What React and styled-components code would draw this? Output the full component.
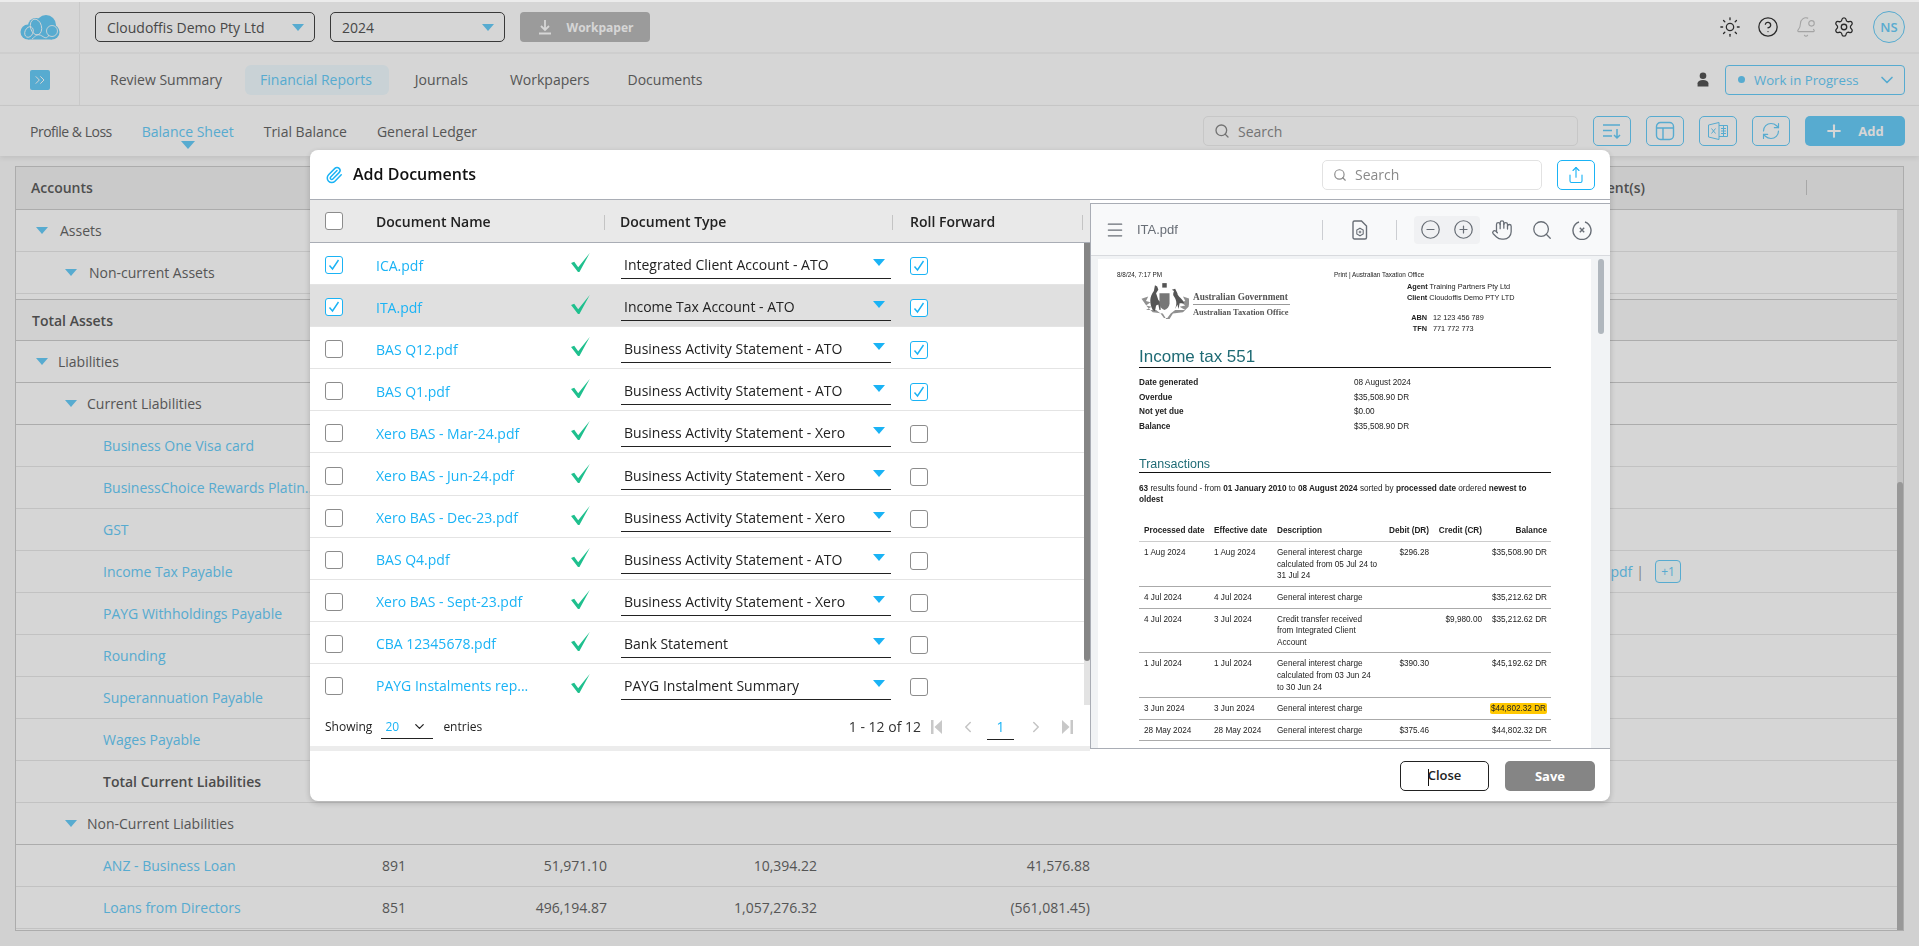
import React from 'react';
import styled, { createGlobalStyle } from 'styled-components';
import {
  Sun, CircleHelp, BellDot, Settings, ChevronDown, ChevronsRight, Search, Plus,
  Paperclip, Share, RefreshCw, Menu, CircleMinus, CirclePlus, Hand, ChevronLeft, ChevronRight,
} from 'lucide-react';

const BLUE = '#68ccf8';
const MODAL_BLUE = '#1ab3f5';

const GlobalStyle = createGlobalStyle`
  html, body { margin: 0; padding: 0; background: #f9f9f9; }
  body { font-family: "Open Sans", "Liberation Sans", sans-serif; font-size: 14px; color: #666; overflow: hidden; }
  * { box-sizing: border-box; }
`;

const Page = styled.div`
  width: 1919px;
  height: 946px;
  overflow: hidden;
  border-top: 2px solid #ececec;
`;

const TopBar = styled.header`
  display: flex;
  align-items: center;
  height: 52px;
  background: #fff;
  border-bottom: 2px solid #f6f6f6;
`;

const BrandCell = styled.div`
  width: 80px;
  height: 100%;
  display: flex;
  align-items: center;
  justify-content: center;
  border-right: 1px solid #f0f0f0;
`;

const Controls = styled.div`
  display: flex;
  align-items: center;
  gap: 15px;
  padding-left: 15px;
`;

const Picker = styled.div`
  width: ${(p) => p.$width}px;
  height: 30px;
  display: flex;
  align-items: center;
  justify-content: space-between;
  padding: 0 10px 0 11px;
  border: 1px solid #444;
  border-radius: 5px;
  color: #555;
  font-size: 14px;
`;

const Triangle = styled.i`
  display: block;
  width: 0;
  height: 0;
  flex: none;
  border-left: ${(p) => p.$size || 6}px solid transparent;
  border-right: ${(p) => p.$size || 6}px solid transparent;
  border-top: ${(p) => (p.$size || 6) + 1}px solid ${(p) => p.$color || BLUE};
`;

const WorkpaperButton = styled.button`
  width: 130px;
  height: 30px;
  display: flex;
  align-items: center;
  justify-content: center;
  gap: 14px;
  border: 0;
  border-radius: 4px;
  background: #b9b9b9;
  color: #fff;
  font: 700 12px "Open Sans", sans-serif;
`;

const TopIcons = styled.div`
  margin-left: auto;
  display: flex;
  align-items: center;
  gap: 16px;
  padding-right: 14px;
  color: #333;
`;

const Avatar = styled.div`
  width: 32px;
  height: 32px;
  margin-left: 2px;
  display: flex;
  align-items: center;
  justify-content: center;
  border: 1px solid ${BLUE};
  border-radius: 50%;
  background: #f6ffff;
  color: ${BLUE};
  font-size: 13px;
  font-weight: 600;
`;

const NavBar = styled.nav`
  display: flex;
  align-items: center;
  height: 52px;
  background: #fff;
  border-bottom: 1px solid #efefef;
`;

const ExpandIcon = styled.div`
  width: 20px;
  height: 20px;
  display: flex;
  align-items: center;
  justify-content: center;
  border-radius: 2px;
  background: ${BLUE};
  color: #fff;
`;

const NavTabs = styled.div`
  display: flex;
  align-items: center;
  gap: 8px;
  padding-left: 15px;
`;

const NavTab = styled.a`
  height: 30px;
  display: flex;
  align-items: center;
  padding: 0 ${(p) => (p.$active ? 17 : 15)}px 0 15px;
  margin-right: ${(p) => p.$after || 0}px;
  border-radius: 6px;
  font-size: 14px;
  color: ${(p) => (p.$active ? BLUE : '#666')};
  background: ${(p) => (p.$active ? '#f0fbff' : 'transparent')};
`;

const StatusArea = styled.div`
  margin-left: auto;
  display: flex;
  align-items: center;
  gap: 16px;
  padding-right: 14px;
`;

const StatusPicker = styled.div`
  width: 180px;
  height: 30px;
  display: flex;
  align-items: center;
  gap: 9px;
  padding: 0 7px 0 12px;
  border: 1px solid ${BLUE};
  border-radius: 4px;
  color: ${BLUE};
  font-size: 13.2px;
`;

const StatusDot = styled.i`
  width: 7px;
  height: 7px;
  border-radius: 50%;
  background: ${BLUE};
`;

const StatusChevron = styled.span`
  margin-left: auto;
  display: flex;
`;

const SubBar = styled.div`
  display: flex;
  align-items: center;
  height: 50px;
  padding-left: 30px;
  background: #fff;
  box-shadow: 0 2px 5px rgba(0, 0, 0, 0.08);
`;

const SubTabs = styled.div`
  display: flex;
  gap: 30px;
`;

const SubTab = styled.a`
  position: relative;
  font-size: 14px;
  letter-spacing: ${(p) => p.$tight || 0}px;
  color: ${(p) => (p.$active ? BLUE : '#666')};
`;

const TabPointer = styled.span`
  position: absolute;
  left: 50%;
  bottom: -8px;
  margin-left: -7px;
`;

const ToolArea = styled.div`
  margin-left: auto;
  display: flex;
  align-items: center;
  gap: 15px;
  padding-right: 14px;
`;

const SearchBox = styled.div`
  width: ${(p) => p.$width}px;
  height: 30px;
  display: flex;
  align-items: center;
  gap: 8px;
  padding-left: 10px;
  border: 1px solid ${(p) => p.$border || '#eee'};
  border-radius: 5px;
  background: #fff;
  color: #8a8a8a;
  font-size: 14px;
`;

const ToolButton = styled.button`
  width: 38px;
  height: 30px;
  padding: 0;
  display: flex;
  align-items: center;
  justify-content: center;
  border: 1px solid ${BLUE};
  border-radius: 5px;
  background: #fff;
  color: ${BLUE};
`;

const AddButton = styled.button`
  width: 100px;
  height: 30px;
  display: flex;
  align-items: center;
  justify-content: center;
  gap: 14px;
  padding-right: 8px;
  border: 0;
  border-radius: 5px;
  background: ${BLUE};
  color: #fff;
  font: 700 13px "Open Sans", sans-serif;
`;

const AccountsTable = styled.section`
  margin: 10px 15px 0;
  height: 765px;
  display: flex;
  flex-direction: column;
  background: #fff;
  border: 1px solid #cdcdcd;
`;

const AccountsHead = styled.div`
  display: flex;
  align-items: center;
  justify-content: space-between;
  flex: none;
  height: 43px;
  padding: 0 96px 2px 15px;
  background: #f1f1f1;
  border-bottom: 1px solid #cdcdcd;
  font-weight: 600;
  font-size: 14px;
  color: #5d5d5d;
`;

const HeadSeparator = styled.i`
  width: 1px;
  height: 15px;
  margin-left: 161px;
  background: #c8c8c8;
`;

const HeadEnd = styled.div`
  display: flex;
  align-items: center;
`;

const AccountsBody = styled.div`
  flex: 1;
  min-height: 0;
  display: flex;
`;

const AccountsRows = styled.div`
  flex: 1;
  min-width: 0;
`;

const AccountRow = styled.div`
  display: grid;
  grid-template-columns: 366px 58px 167px 210px 273px 1fr;
  align-items: center;
  height: ${(p) => (p.$thin ? 6 : p.$total ? 41 : 42)}px;
  background: ${(p) => (p.$total ? '#f9f9f9' : '#fff')};
  border-bottom: 1px solid ${(p) => (p.$strong ? '#cdcdcd' : '#e8e8e8')};
  font-size: 14px;
`;

const AccountName = styled.div`
  padding-left: ${(p) => p.$indent}px;
  display: flex;
  align-items: center;
  gap: ${(p) => p.$gap || 0}px;
  white-space: nowrap;
  font-weight: ${(p) => (p.$bold ? 600 : 400)};
  color: ${(p) => (p.$link ? BLUE : p.$bold ? '#5a5a5a' : '#666')};
`;

const CodeCell = styled.div`
  color: #666;
`;

const Amount = styled.div`
  text-align: right;
  color: #666;
`;

const DocsCell = styled.div`
  display: flex;
  align-items: center;
  justify-content: flex-end;
  padding-right: 216px;
  color: ${BLUE};
`;

const DocsBar = styled.span`
  margin: 0 11px 0 4px;
  color: #999;
`;

const MoreChip = styled.span`
  width: 26px;
  height: 23px;
  display: flex;
  align-items: center;
  justify-content: center;
  border: 1px solid ${BLUE};
  border-radius: 4px;
  background: #f6ffff;
  font-size: 12px;
`;

const OuterTrack = styled.div`
  flex: none;
  width: 6px;
  display: flex;
  flex-direction: column;
  justify-content: flex-end;
  background: #eaeaea;
`;

const OuterThumb = styled.div`
  height: 448px;
  border-radius: 3px 3px 0 0;
  background: #b6b6b6;
`;

const Overlay = styled.div`
  position: fixed;
  inset: 2px 0 0 0;
  padding: 148px 0 0 310px;
  background: rgba(0, 0, 0, 0.16);
`;

const Dialog = styled.div`
  width: 1300px;
  height: 651px;
  display: flex;
  flex-direction: column;
  background: #fff;
  border-radius: 8px;
  box-shadow: 0 2px 6px rgba(0, 0, 0, 0.2);
  overflow: hidden;
`;

const DialogHead = styled.div`
  flex: none;
  height: 50px;
  display: flex;
  align-items: center;
  padding: 0 15px;
  border-bottom: 1px solid #a9adb5;
`;

const DialogTitle = styled.h2`
  margin: 0 0 2px 10px;
  color: #111;
  font-size: 16px;
  font-weight: 600;
`;

const HeadTools = styled.div`
  margin-left: auto;
  display: flex;
  align-items: center;
  gap: 15px;
`;

const UploadButton = styled.button`
  width: 38px;
  height: 30px;
  padding: 0;
  display: flex;
  align-items: center;
  justify-content: center;
  border: 1px solid ${MODAL_BLUE};
  border-radius: 5px;
  background: #fff;
  color: ${MODAL_BLUE};
`;

const DialogBody = styled.div`
  flex: none;
  height: 551px;
  display: flex;
`;

const DocsPanel = styled.div`
  flex: none;
  width: 780px;
  display: flex;
  flex-direction: column;
`;

const DocsHead = styled.div`
  flex: none;
  display: grid;
  grid-template-columns: 51px 229px 288px 190px;
  align-items: center;
  height: 43px;
  padding-left: 15px;
  background: #e9e9e9;
  border-bottom: 1px solid #a9adb5;
  color: #222;
  font-weight: 600;
  font-size: 14px;
`;

const DocsHeadCell = styled.div`
  position: relative;
  padding-left: ${(p) => p.$pad || 0}px;
  &::after {
    content: '';
    position: absolute;
    right: 0;
    top: 3px;
    width: 1px;
    height: 15px;
    background: #c4c4c4;
  }
`;

const DocsScroller = styled.div`
  flex: none;
  height: 462px;
  display: flex;
  overflow: hidden;
`;

const DocsList = styled.div`
  flex: 1;
  min-width: 0;
`;

const DocRow = styled.div`
  display: grid;
  grid-template-columns: 51px 194px 50px 273px 1fr;
  align-items: center;
  height: 42.1px;
  padding: 3px 0 0 15px;
  background: ${(p) => (p.$selected ? '#e0e0e0' : '#fff')};
  border-bottom: 1px solid #e4e4e4;
`;

const DocLink = styled.a`
  color: ${MODAL_BLUE};
  font-size: 14px;
  white-space: nowrap;
`;

const TickMark = styled.svg`
  display: block;
  width: 21px;
  height: 21px;
  margin-top: -5px;
`;

const TypeSelect = styled.div`
  height: 28px;
  margin: 0 2px 0 1px;
  display: flex;
  align-items: center;
  justify-content: space-between;
  padding: 0 6px 0 3px;
  border-bottom: 1.5px solid #222;
  color: #222;
  font-size: 14px;
`;

const TypeArrow = styled.span`
  margin-top: -4px;
`;

const RollCell = styled.div`
  padding: 2px 0 0 17px;
`;

const Box = styled.span`
  display: flex;
  align-items: center;
  justify-content: center;
  width: 18px;
  height: 18px;
  border: 1px solid ${(p) => (p.$checked ? MODAL_BLUE : '#8c8c8c')};
  border-radius: 3px;
  background: #fff;
`;

const DocsTrack = styled.div`
  flex: none;
  width: 6px;
  background: #e3e3e3;
`;

const DocsThumb = styled.div`
  height: 418px;
  border-radius: 0 0 3px 3px;
  background: #858585;
`;

const DocsFooter = styled.div`
  flex: none;
  height: 41px;
  display: flex;
  align-items: center;
  padding: 2px 8px 0 15px;
  font-size: 12px;
  color: #222;
`;

const PageSize = styled.div`
  width: 52px;
  height: 25px;
  margin: 0 10px 0 9px;
  display: flex;
  align-items: center;
  justify-content: space-between;
  padding: 0 6px 0 4px;
  border-bottom: 1px solid #222;
  color: ${MODAL_BLUE};
`;

const Pager = styled.div`
  margin-left: auto;
  display: flex;
  align-items: center;
  color: #c4c4c4;
`;

const PagerText = styled.span`
  color: #333;
  font-size: 14px;
`;

const PagerSlot = styled.span`
  width: 31px;
  display: flex;
  justify-content: center;
`;

const PagerCurrent = styled.span`
  width: 27px;
  height: 26px;
  margin: 0 6px 0 4px;
  display: flex;
  align-items: center;
  justify-content: center;
  border-bottom: 1px solid #222;
  color: ${MODAL_BLUE};
  font-size: 14px;
`;

const FooterStrip = styled.div`
  flex: none;
  height: 5px;
  background: #ececec;
`;

const Viewer = styled.div`
  flex: none;
  width: 520px;
  height: 546px;
  margin-top: 3px;
  display: flex;
  flex-direction: column;
  background: #f1f3f5;
  border: 1px solid #a9adb5;
  border-right: 0;
`;

const ViewerBar = styled.div`
  flex: none;
  height: 52px;
  display: flex;
  align-items: center;
  padding-left: 14px;
  background: #f8f9fa;
  border-bottom: 1px solid #d8dade;
  color: #686e76;
`;

const ViewerName = styled.span`
  width: 185px;
  margin-left: 12px;
  font: 13px "Liberation Sans", sans-serif;
`;

const ViewerRule = styled.i`
  width: 1px;
  height: 20px;
  background: #ccced2;
`;

const ViewerAction = styled.span`
  width: ${(p) => p.$width}px;
  display: flex;
  justify-content: center;
`;

const ZoomGroup = styled.div`
  width: 66px;
  height: 28px;
  margin: 0 2px 0 17px;
  display: flex;
  align-items: center;
  justify-content: space-around;
  border-radius: 4px;
  background: #f0f1f3;
`;

const ViewerBody = styled.div`
  flex: 1;
  min-height: 0;
  display: flex;
  padding: 3px 0 0 7px;
  gap: 7px;
`;

const PdfPage = styled.article`
  flex: none;
  width: 493px;
  height: 100%;
  overflow: hidden;
  background: #fff;
  color: #222;
  font: 8.2px "Liberation Sans", sans-serif;
  filter: blur(0.3px);
`;

const ViewerThumb = styled.div`
  flex: none;
  width: 6px;
  height: 75px;
  border-radius: 3px;
  background: #b0b7be;
`;

const PrintHead = styled.div`
  display: grid;
  grid-template-columns: 217px 1fr;
  height: 8px;
  margin-top: 12px;
  padding-left: 19px;
  line-height: 8px;
  font-size: 6.4px;
`;

const Letterhead = styled.div`
  display: grid;
  grid-template-columns: 309px 1fr;
  height: 52px;
  margin-top: 3px;
`;

const Crest = styled.div`
  display: flex;
  align-items: flex-start;
  gap: 4px;
  padding-left: 42px;
`;

const GovNames = styled.div`
  margin-top: 9px;
  width: 97px;
  color: #555;
  font: 700 9.3px "Liberation Serif", serif;
  line-height: 12px;
`;

const GovSecond = styled.div`
  margin-top: 1px;
  border-top: 1px solid #999;
  padding-top: 2px;
  font-size: 8.4px;
`;

const ClientLine = styled.div`
  line-height: 10.5px;
  font-size: 7.3px;
`;

const IdBlock = styled.div`
  margin-top: 10px;
`;

const IdLine = styled.div`
  display: grid;
  grid-template-columns: 20px 1fr;
  column-gap: 6px;
  line-height: 10.5px;
  font-size: 7.3px;
  & b { text-align: right; }
`;

const Section = styled.section`
  margin: ${(p) => p.$top}px 40px 0 41px;
`;

const PdfHeading = styled.h3`
  margin: 0;
  padding: 0;
  border-bottom: 1px solid #111;
  color: #1f6b75;
  font-weight: 400;
  font-size: ${(p) => p.$size}px;
  line-height: ${(p) => p.$line}px;
`;

const KeyRow = styled.div`
  display: grid;
  grid-template-columns: 215px 1fr;
  height: 14.5px;
  line-height: 14.5px;
`;

const Para = styled.p`
  margin: 0;
  line-height: 11.3px;
`;

const TxGrid = styled.div`
  display: grid;
  grid-template-columns: 70px 63px 113px 49px 53px 65px;
  line-height: 11.6px;
  white-space: nowrap;
  padding: ${(p) => (p.$head ? '3.5px 0 4.5px' : '5px 0 4px')};
  border-bottom: 1px solid ${(p) => (p.$head ? '#ccc' : '#aaa')};
  font-weight: ${(p) => (p.$head ? 700 : 400)};
`;

const TxCell = styled.div`
  padding: ${(p) => (p.$right ? '0 5px 0 0' : '0 0 0 5px')};
  text-align: ${(p) => (p.$right ? 'right' : 'left')};
`;

const Marked = styled.mark`
  padding: 1px;
  border-radius: 2px;
  background: #ffc800;
  color: #222;
`;

const DialogFooter = styled.div`
  flex: none;
  height: 50px;
  display: flex;
  justify-content: flex-end;
  gap: 16px;
  padding: 10px 15px 0 0;
`;

const CloseButton = styled.button`
  width: 89px;
  height: 30px;
  padding: 0;
  border: 1px solid #222;
  border-radius: 5px;
  background: #fff;
  color: #222;
  font: 600 13px "Open Sans", sans-serif;
  &::before {
    content: '';
    display: inline-block;
    width: 1px;
    height: 17px;
    margin-right: -1px;
    vertical-align: middle;
    background: #111;
  }
`;

const SaveButton = styled.button`
  width: 90px;
  height: 30px;
  border: 0;
  border-radius: 5px;
  background: #858585;
  color: #fff;
  font: 700 13px "Open Sans", sans-serif;
`;

const accountRows = [
  { name: 'Assets', indent: 20, arrow: true, gap: 12 },
  { name: 'Non-current Assets', indent: 49, arrow: true, gap: 12 },
  { thin: true, strong: true },
  { name: 'Total Assets', indent: 16, bold: true, total: true, strong: true },
  { name: 'Liabilities', indent: 20, arrow: true, gap: 10, strong: true },
  { name: 'Current Liabilities', indent: 49, arrow: true, gap: 10, strong: true },
  { name: 'Business One Visa card', indent: 87, link: true },
  { name: 'BusinessChoice Rewards Platin...', indent: 87, link: true },
  { name: 'GST', indent: 87, link: true },
  { name: 'Income Tax Payable', indent: 87, link: true, docs: true },
  { name: 'PAYG Withholdings Payable', indent: 87, link: true },
  { name: 'Rounding', indent: 87, link: true },
  { name: 'Superannuation Payable', indent: 87, link: true },
  { name: 'Wages Payable', indent: 87, link: true },
  { name: 'Total Current Liabilities', indent: 87, bold: true },
  { name: 'Non-Current Liabilities', indent: 49, arrow: true, gap: 10, strong: true },
  { name: 'ANZ - Business Loan', indent: 87, link: true, code: '891', values: ['51,971.10', '10,394.22', '41,576.88'] },
  { name: 'Loans from Directors', indent: 87, link: true, code: '851', values: ['496,194.87', '1,057,276.32', '(561,081.45)'] },
];

const documents = [
  { name: 'ICA.pdf', type: 'Integrated Client Account - ATO', checked: true, roll: true },
  { name: 'ITA.pdf', type: 'Income Tax Account - ATO', checked: true, roll: true, selected: true },
  { name: 'BAS Q12.pdf', type: 'Business Activity Statement - ATO', roll: true },
  { name: 'BAS Q1.pdf', type: 'Business Activity Statement - ATO', roll: true },
  { name: 'Xero BAS - Mar-24.pdf', type: 'Business Activity Statement - Xero' },
  { name: 'Xero BAS - Jun-24.pdf', type: 'Business Activity Statement - Xero' },
  { name: 'Xero BAS - Dec-23.pdf', type: 'Business Activity Statement - Xero' },
  { name: 'BAS Q4.pdf', type: 'Business Activity Statement - ATO' },
  { name: 'Xero BAS - Sept-23.pdf', type: 'Business Activity Statement - Xero' },
  { name: 'CBA 12345678.pdf', type: 'Bank Statement' },
  { name: 'PAYG Instalments rep...', type: 'PAYG Instalment Summary' },
];

const transactions = [
  ['1 Aug 2024', '1 Aug 2024', ['General interest charge', 'calculated from 05 Jul 24 to', '31 Jul 24'], '$296.28', '', '$35,508.90 DR'],
  ['4 Jul 2024', '4 Jul 2024', ['General interest charge'], '', '', '$35,212.62 DR'],
  ['4 Jul 2024', '3 Jul 2024', ['Credit transfer received', 'from Integrated Client', 'Account'], '', '$9,980.00', '$35,212.62 DR'],
  ['1 Jul 2024', '1 Jul 2024', ['General interest charge', 'calculated from 03 Jun 24', 'to 30 Jun 24'], '$390.30', '', '$45,192.62 DR'],
  ['3 Jun 2024', '3 Jun 2024', ['General interest charge'], '', '', '$44,802.32 DR', true],
  ['28 May 2024', '28 May 2024', ['General interest charge'], '$375.46', '', '$44,802.32 DR'],
];

function CloudLogo() {
  return (
    <svg width="40" height="25" viewBox="0 0 40 25">
      <g fill={BLUE}>
        <circle cx="8" cy="17" r="7.5" />
        <circle cx="16" cy="11" r="8" />
        <circle cx="26" cy="10" r="10" />
        <circle cx="32" cy="17" r="7.5" />
        <rect x="8" y="14" width="24" height="10.5" />
      </g>
      <g fill="none" stroke="#fff" strokeWidth="0.85">
        <ellipse cx="9" cy="17" rx="4" ry="5.5" transform="rotate(25 9 17)" />
        <ellipse cx="16" cy="12" rx="5.5" ry="8" transform="rotate(-15 16 12)" />
        <circle cx="32" cy="16" r="5.5" />
        <path d="M12 24c4-3 5-6 10-3 3 2 5 3 7-1" />
      </g>
    </svg>
  );
}

function ArrowToLine() {
  return (
    <svg width="16" height="16" viewBox="0 0 16 16" fill="none" stroke="currentColor" strokeWidth="1.8">
      <path d="M8 1v9M4 7l4 4 4-4M2 14.500h12" />
    </svg>
  );
}

function SortIcon() {
  return (
    <svg width="20" height="18" viewBox="0 0 20 18" fill="none" stroke="currentColor" strokeWidth="1.5">
      <path d="M1 3h17M1 8.500h9M1 14h9M15 7v9M12 13l3 3 3-3" />
    </svg>
  );
}

function LayoutIcon() {
  return (
    <svg width="20" height="20" viewBox="0 0 20 20" fill="none" stroke="currentColor" strokeWidth="1.4">
      <rect x="1.500" y="1.500" width="17" height="17" rx="4" />
      <path d="M1.500 7h17M8 7v11.500" />
    </svg>
  );
}

function ExcelIcon() {
  return (
    <svg width="22" height="20" viewBox="0 0 22 20" fill="none" stroke="currentColor" strokeWidth="1">
      <path d="M1.500 4L12 1.500v17L1.500 16z" />
      <path d="M12 4.500h8.500v11H12M14 7.500h5M14 10h5M14 12.500h5M16.500 5v10" />
      <path d="M4.500 7.500l4 5M8.500 7.500l-4 5" />
    </svg>
  );
}

function PersonIcon() {
  return (
    <svg width="12" height="15" viewBox="0 0 14 18" fill="#555">
      <circle cx="7" cy="4.500" r="4" />
      <path d="M0.500 17.500v-4C0.500 11 3 9.500 7 9.500s6.500 1.500 6.500 4v4z" />
    </svg>
  );
}

function CheckGlyph() {
  return (
    <svg width="12" height="12" viewBox="0 0 12 12" fill="none" stroke={MODAL_BLUE} strokeWidth="1.4">
      <path d="M1.500 6.500l3 3.500 6-9" />
    </svg>
  );
}

function Tick() {
  return (
    <TickMark viewBox="0 0 20 20">
      <path fill="#1fc08e" d="M1 10.500l3-1.300 3.800 5.300L18.800 1 9 19H7.600z" />
    </TickMark>
  );
}

function EdgeArrow({ flip }) {
  return (
    <svg width="12" height="16" viewBox="0 0 12 16" fill="#c8c8c8" style={flip ? { transform: 'scaleX(-1)' } : undefined}>
      <rect x="0" y="1" width="2.500" height="14" />
      <path d="M11 1v14L3.500 8z" />
    </svg>
  );
}

function FileGearIcon() {
  return (
    <svg width="16" height="20" viewBox="0 0 16 20" fill="none" stroke="#686e76" strokeWidth="1.4">
      <path d="M2.500 1h7l5 5v11.500a1.500 1.500 0 0 1-1.500 1.500H2.500A1.500 1.500 0 0 1 1 17.500v-15A1.500 1.500 0 0 1 2.500 1z" />
      <path d="M8 8.200l3.200 1.900v3.800L8 15.800l-3.200-1.900v-3.800z" strokeWidth="1.1" />
      <circle cx="8" cy="12" r="0.900" strokeWidth="1" />
    </svg>
  );
}

function ClosedRingIcon() {
  return (
    <svg width="20" height="20" viewBox="0 0 20 20" fill="none" stroke="#686e76" strokeWidth="1.4">
      <path d="M13 2a9 9 0 1 1-6 0" />
      <path d="M7.800 7.800l4.400 4.400M12.200 7.800l-4.400 4.400" />
    </svg>
  );
}

function CoatOfArms() {
  return (
    <svg width="49" height="37" viewBox="4 2 41 33" fill="#555">
      <path d="M14 27c-3-6-3-12 1-17l1-5 2 1 1 3-2 3 2 6 2 2v7h-1l-1-5-2 1-1 5z" />
      <path d="M34 26c2-5 1-8-1-11-1-1-1-3 0-5l-2-1 3-1 2 4c0 3 5 5 6 9l-4 0-1 5-1-4z" />
      <path d="M20 12h9v9c0 3-2 5-4.500 6-2.500-1-4.500-3-4.500-6z" fill="#777" />
      <rect x="22.500" y="3" width="4" height="4" />
      <path d="M4 17l6-2-2 4 4 1-4 3 5 1-5 3h9l4 3 3 4h3l3-4 4-3h9l-5-3 5-1-4-3 4-1-2-4 6 2-1 7-5 5-9 1-3 5h-3l-3-5-9-1-5-5z" opacity="0.65" />
    </svg>
  );
}

function AccountsPanel() {
  return (
    <AccountsTable>
      <AccountsHead>
        <span>Accounts</span>
        <HeadEnd>
          <span>Document(s)</span>
          <HeadSeparator />
        </HeadEnd>
      </AccountsHead>
      <AccountsBody>
        <AccountsRows>
          {accountRows.map((row, i) => (
            <AccountRow key={i} $thin={row.thin} $strong={row.strong} $total={row.total}>
              <AccountName $indent={row.indent} $gap={row.gap} $bold={row.bold} $link={row.link}>
                {row.arrow && <Triangle $size={6} />}
                {row.name}
              </AccountName>
              {row.code && <CodeCell>{row.code}</CodeCell>}
              {row.values && row.values.map((v) => <Amount key={v}>{v}</Amount>)}
              {row.docs && (
                <>
                  <span />
                  <span />
                  <span />
                  <span />
                  <DocsCell>
                    ATO Income Tax.pdf
                    <DocsBar>|</DocsBar>
                    <MoreChip>+1</MoreChip>
                  </DocsCell>
                </>
              )}
            </AccountRow>
          ))}
        </AccountsRows>
        <OuterTrack>
          <OuterThumb />
        </OuterTrack>
      </AccountsBody>
    </AccountsTable>
  );
}

function DocumentList() {
  return (
    <DocsPanel>
      <DocsHead>
        <Box />
        <DocsHeadCell>Document Name</DocsHeadCell>
        <DocsHeadCell $pad={15}>Document Type</DocsHeadCell>
        <DocsHeadCell $pad={17}>Roll Forward</DocsHeadCell>
      </DocsHead>
      <DocsScroller>
        <DocsList>
          {documents.map((doc) => (
            <DocRow key={doc.name} $selected={doc.selected}>
              <Box $checked={doc.checked}>{doc.checked && <CheckGlyph />}</Box>
              <DocLink>{doc.name}</DocLink>
              <Tick />
              <TypeSelect>
                {doc.type}
                <TypeArrow>
                  <Triangle $size={6} $color={MODAL_BLUE} />
                </TypeArrow>
              </TypeSelect>
              <RollCell>
                <Box $checked={doc.roll}>{doc.roll && <CheckGlyph />}</Box>
              </RollCell>
            </DocRow>
          ))}
        </DocsList>
        <DocsTrack>
          <DocsThumb />
        </DocsTrack>
      </DocsScroller>
      <DocsFooter>
        Showing
        <PageSize>
          <span>20</span>
          <ChevronDown size={15} color="#222" />
        </PageSize>
        entries
        <Pager>
          <PagerText>1 - 12 of 12</PagerText>
          <PagerSlot><EdgeArrow /></PagerSlot>
          <PagerSlot><ChevronLeft size={18} /></PagerSlot>
          <PagerCurrent>1</PagerCurrent>
          <PagerSlot><ChevronRight size={18} /></PagerSlot>
          <PagerSlot><EdgeArrow flip /></PagerSlot>
        </Pager>
      </DocsFooter>
      <FooterStrip />
    </DocsPanel>
  );
}

function PdfContent() {
  return (
    <PdfPage>
      <PrintHead>
        <span>8/8/24, 7:17 PM</span>
        <span>Print | Australian Taxation Office</span>
      </PrintHead>
      <Letterhead>
        <Crest>
          <CoatOfArms />
          <GovNames>
            Australian Government
            <GovSecond>Australian Taxation Office</GovSecond>
          </GovNames>
        </Crest>
        <div>
          <ClientLine><b>Agent</b> Training Partners Pty Ltd</ClientLine>
          <ClientLine><b>Client</b> Cloudoffis Demo PTY LTD</ClientLine>
          <IdBlock>
            <IdLine><b>ABN</b><span>12 123 456 789</span></IdLine>
            <IdLine><b>TFN</b><span>771 772 773</span></IdLine>
          </IdBlock>
        </div>
      </Letterhead>
      <Section $top={13}>
        <PdfHeading $size={17} $line={20}>Income tax 551</PdfHeading>
      </Section>
      <Section $top={8}>
        <KeyRow><b>Date generated</b><span>08 August 2024</span></KeyRow>
        <KeyRow><b>Overdue</b><span>$35,508.90 DR</span></KeyRow>
        <KeyRow><b>Not yet due</b><span>$0.00</span></KeyRow>
        <KeyRow><b>Balance</b><span>$35,508.90 DR</span></KeyRow>
      </Section>
      <Section $top={22}>
        <PdfHeading $size={12.5} $line={16}>Transactions</PdfHeading>
      </Section>
      <Section $top={10}>
        <Para>
          <b>63</b> results found - from <b>01 January 2010</b> to <b>08 August 2024</b> sorted by{' '}
          <b>processed date</b> ordered <b>newest to oldest</b>
        </Para>
      </Section>
      <Section $top={16}>
        <TxGrid $head>
          <TxCell>Processed date</TxCell>
          <TxCell>Effective date</TxCell>
          <TxCell>Description</TxCell>
          <TxCell $right>Debit (DR)</TxCell>
          <TxCell $right>Credit (CR)</TxCell>
          <TxCell $right>Balance</TxCell>
        </TxGrid>
        {transactions.map(([processed, effective, lines, debit, credit, balance, marked], i) => (
          <TxGrid key={i}>
            <TxCell>{processed}</TxCell>
            <TxCell>{effective}</TxCell>
            <TxCell>
              {lines.map((line) => (
                <div key={line}>{line}</div>
              ))}
            </TxCell>
            <TxCell $right>{debit}</TxCell>
            <TxCell $right>{credit}</TxCell>
            <TxCell $right>{marked ? <Marked>{balance}</Marked> : balance}</TxCell>
          </TxGrid>
        ))}
      </Section>
    </PdfPage>
  );
}

function AddDocumentsDialog() {
  return (
    <Overlay>
      <Dialog>
        <DialogHead>
          <Paperclip size={18} color={MODAL_BLUE} />
          <DialogTitle>Add Documents</DialogTitle>
          <HeadTools>
            <SearchBox $width={220} $border="#e2e2e2">
              <Search size={14} />
              Search
            </SearchBox>
            <UploadButton><Share size={18} strokeWidth={1.5} /></UploadButton>
          </HeadTools>
        </DialogHead>
        <DialogBody>
          <DocumentList />
          <Viewer>
            <ViewerBar>
              <Menu size={20} strokeWidth={1.5} />
              <ViewerName>ITA.pdf</ViewerName>
              <ViewerRule />
              <ViewerAction $width={73}><FileGearIcon /></ViewerAction>
              <ViewerRule />
              <ZoomGroup>
                <CircleMinus size={21} strokeWidth={1.4} />
                <CirclePlus size={21} strokeWidth={1.4} />
              </ZoomGroup>
              <ViewerAction $width={40}><Hand size={22} strokeWidth={1.4} /></ViewerAction>
              <ViewerAction $width={40}><Search size={22} strokeWidth={1.4} /></ViewerAction>
              <ViewerAction $width={40}><ClosedRingIcon /></ViewerAction>
            </ViewerBar>
            <ViewerBody>
              <PdfContent />
              <ViewerThumb />
            </ViewerBody>
          </Viewer>
        </DialogBody>
        <DialogFooter>
          <CloseButton>Close</CloseButton>
          <SaveButton>Save</SaveButton>
        </DialogFooter>
      </Dialog>
    </Overlay>
  );
}

export default function App() {
  return (
    <Page>
      <GlobalStyle />
      <TopBar>
        <BrandCell><CloudLogo /></BrandCell>
        <Controls>
          <Picker $width={220}>Cloudoffis Demo Pty Ltd<Triangle $size={6} /></Picker>
          <Picker $width={175}>2024<Triangle $size={6} /></Picker>
          <WorkpaperButton><ArrowToLine />Workpaper</WorkpaperButton>
        </Controls>
        <TopIcons>
          <Sun size={22} strokeWidth={1.4} />
          <CircleHelp size={22} strokeWidth={1.4} />
          <BellDot size={22} strokeWidth={1.2} color="#c4c4c4" />
          <Settings size={22} strokeWidth={1.4} />
          <Avatar>NS</Avatar>
        </TopIcons>
      </TopBar>
      <NavBar>
        <BrandCell>
          <ExpandIcon><ChevronsRight size={16} strokeWidth={1.5} /></ExpandIcon>
        </BrandCell>
        <NavTabs>
          <NavTab>Review Summary</NavTab>
          <NavTab $active $after={3}>Financial Reports</NavTab>
          <NavTab $after={4}>Journals</NavTab>
          <NavTab>Workpapers</NavTab>
          <NavTab>Documents</NavTab>
        </NavTabs>
        <StatusArea>
          <PersonIcon />
          <StatusPicker>
            <StatusDot />
            Work in Progress
            <StatusChevron><ChevronDown size={20} /></StatusChevron>
          </StatusPicker>
        </StatusArea>
      </NavBar>
      <SubBar>
        <SubTabs>
          <SubTab $tight={-0.5}>Profile &amp; Loss</SubTab>
          <SubTab $active>
            Balance Sheet
            <TabPointer><Triangle $size={7} /></TabPointer>
          </SubTab>
          <SubTab>Trial Balance</SubTab>
          <SubTab>General Ledger</SubTab>
        </SubTabs>
        <ToolArea>
          <SearchBox $width={375}><Search size={16} />Search</SearchBox>
          <ToolButton><SortIcon /></ToolButton>
          <ToolButton><LayoutIcon /></ToolButton>
          <ToolButton><ExcelIcon /></ToolButton>
          <ToolButton><RefreshCw size={20} strokeWidth={1.4} /></ToolButton>
          <AddButton><Plus size={20} strokeWidth={2.5} />Add</AddButton>
        </ToolArea>
      </SubBar>
      <AccountsPanel />
      <AddDocumentsDialog />
    </Page>
  );
}
